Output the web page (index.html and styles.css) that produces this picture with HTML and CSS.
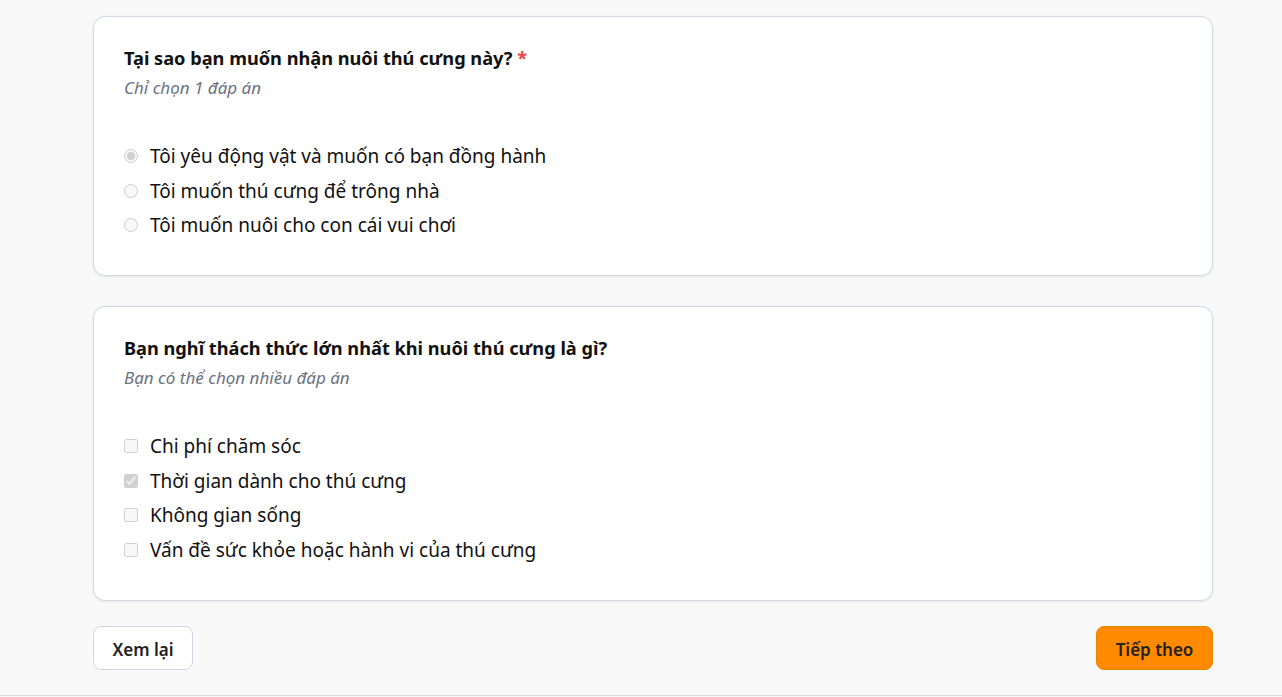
FILE: index.html
```html
<!DOCTYPE html>
<html lang="vi">
<head>
<meta charset="utf-8">
<link rel="stylesheet" href="styles.css">
</head>
<body>
<main class="page">
  <section class="card">
    <h2 class="q-title">Tại sao bạn muốn nhận nuôi thú cưng này? <span class="req">*</span></h2>
    <p class="q-hint">Chỉ chọn 1 đáp án</p>
    <div class="options">
      <label class="opt"><input type="radio" name="q1" checked disabled><span>Tôi yêu động vật và muốn có bạn đồng hành</span></label>
      <label class="opt"><input type="radio" name="q1" disabled><span>Tôi muốn thú cưng để trông nhà</span></label>
      <label class="opt"><input type="radio" name="q1" disabled><span>Tôi muốn nuôi cho con cái vui chơi</span></label>
    </div>
  </section>
  <section class="card">
    <h2 class="q-title">Bạn nghĩ thách thức lớn nhất khi nuôi thú cưng là gì?</h2>
    <p class="q-hint">Bạn có thể chọn nhiều đáp án</p>
    <div class="options">
      <label class="opt"><input type="checkbox" disabled><span>Chi phí chăm sóc</span></label>
      <label class="opt"><input type="checkbox" checked disabled><span>Thời gian dành cho thú cưng</span></label>
      <label class="opt"><input type="checkbox" disabled><span>Không gian sống</span></label>
      <label class="opt"><input type="checkbox" disabled><span>Vấn đề sức khỏe hoặc hành vi của thú cưng</span></label>
    </div>
  </section>
  <div class="actions">
    <button class="btn btn-back" type="button">Xem lại</button>
    <button class="btn btn-next" type="button">Tiếp theo</button>
  </div>
</main>
<div class="footer-line"></div>
</body>
</html>
```

FILE: styles.css
```css
* { box-sizing: border-box; }
html, body { margin: 0; padding: 0; }
body {
  background: #f9f9f9;
  font-family: "Noto Sans", "Open Sans", sans-serif;
  color: #111;
}
.page {
  width: 1120px;
  margin-left: 93px;
  padding-top: 16px;
  display: flex;
  flex-direction: column;
  gap: 30px;
}
.card {
  background: #fff;
  border: 1px solid #cfd9e6;
  border-radius: 12px;
  box-shadow: 0 1px 3px rgba(0,0,0,0.08);
  padding: 28px 30px 38px;
}
.q-title {
  margin: 0;
  font-size: 18.2px;
  line-height: 26px;
  font-weight: 700;
  color: #111;
}
.req { color: #ef4444; }
.q-hint {
  margin: 5px 0 0;
  font-size: 17px;
  line-height: 24px;
  font-style: italic;
  color: #6b7280;
}
.options {
  margin-top: 44px;
  display: flex;
  flex-direction: column;
  gap: 10.6px;
}
.opt {
  display: flex;
  align-items: center;
  gap: 12px;
  font-size: 19px;
  line-height: 24px;
  color: #111;
}
.opt input {
  margin: 0;
  width: 14px;
  height: 14px;
}
.actions {
  display: flex;
  justify-content: space-between;
  margin-top: -5px;
}
.btn {
  height: 44px;
  border-radius: 8px;
  font-family: inherit;
  font-size: 17px;
  font-weight: 600;
  padding: 3px 0 0;
  white-space: nowrap;
  color: #222;
  cursor: pointer;
}
.btn-back {
  background: #fff;
  border: 1px solid #cfd9e6;
  width: 100px;
}
.btn-next {
  background: #ff8a00;
  border: 1px solid #f08000;
  width: 117px;
}
.footer-line {
  position: fixed;
  left: 0; right: 0; bottom: 1px;
  height: 1px;
  background: #d5dbe3;
}
```
